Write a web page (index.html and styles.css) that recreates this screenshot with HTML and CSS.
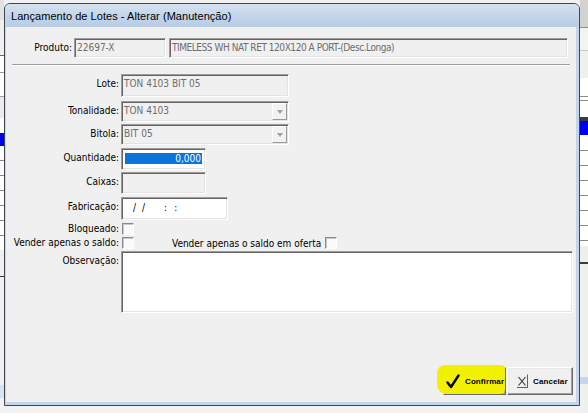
FILE: index.html
```html
<!DOCTYPE html>
<html lang="pt-BR">
<head>
<meta charset="utf-8">
<title>Lançamento de Lotes - Alterar (Manutenção)</title>
<link rel="stylesheet" href="styles.css">
</head>
<body>
<div class="screen">
  <div class="bg-left"></div>
  <div class="window">
    <div class="titlebar">Lançamento de Lotes - Alterar (Manutenção)</div>
    <div class="client">
      <div class="produto-row">
        <label class="lbl">Produto:</label>
        <div class="field">22697-X</div>
        <div class="field desc">TIMELESS WH NAT RET 120X120 A PORT-(Desc.Longa)</div>
      </div>
      <div class="sep"></div>
      <div class="form">
        <div class="row r-lote">
          <label class="lbl">Lote:</label>
          <div class="field w-lg">TON 4103 BIT 05</div>
        </div>
        <div class="row r-tonal">
          <label class="lbl">Tonalidade:</label>
          <div class="field combo w-lg"><span class="combo-text">TON 4103</span><span class="drop"><span class="arrow"></span></span></div>
        </div>
        <div class="row r-bitola">
          <label class="lbl">Bitola:</label>
          <div class="field combo w-lg"><span class="combo-text">BIT 05</span><span class="drop"><span class="arrow"></span></span></div>
        </div>
        <div class="row r-qtde">
          <label class="lbl">Quantidade:</label>
          <div class="field edit w-sm"><span class="selected">0,000</span></div>
        </div>
        <div class="row r-caixas">
          <label class="lbl">Caixas:</label>
          <div class="field w-sm"></div>
        </div>
        <div class="row r-fabric">
          <label class="lbl">Fabricação:</label>
          <div class="field edit w-md mask"><span class="m1">/</span><span class="m2">/</span><span class="m3">:</span><span class="m4">:</span></div>
        </div>
        <div class="row r-check r-bloq">
          <label class="lbl">Bloqueado:</label>
          <div class="checks"><span class="chk"></span></div>
        </div>
        <div class="row r-check r-vender">
          <label class="lbl">Vender apenas o saldo:</label>
          <div class="checks"><span class="chk"></span><span class="chk-text">Vender apenas o saldo em oferta</span><span class="chk"></span></div>
        </div>
        <div class="row r-obs">
          <label class="lbl">Observação:</label>
          <div class="field edit memo"></div>
        </div>
      </div>
      <div class="buttons">
        <button class="btn btn-ok" type="button">
          <span class="hl"></span>
          <svg class="ico" width="14" height="15" viewBox="0 0 14 15"><path d="M1.5 8.5 L5 13 L12.5 1.5" fill="none" stroke="#000" stroke-width="2.4" stroke-linecap="round" stroke-linejoin="round"/></svg>
          <span class="btn-text">Confirmar</span>
        </button>
        <button class="btn btn-cancel" type="button">
          <svg class="ico" width="12" height="14" viewBox="0 0 12 14"><path d="M1.5 3 L8.5 11.5 M8.5 3 L1.5 11.5" stroke="#303030" stroke-width="1.1" fill="none"/><path d="M10.5 0.5 V13.5 M0 13.5 H11" stroke="#606060" stroke-width="1" fill="none"/></svg>
          <span class="btn-text">Cancelar</span>
        </button>
      </div>
    </div>
  </div>
  <div class="bg-right"></div>
</div>
</body>
</html>
```
FILE: styles.css
```css
* { box-sizing: border-box; }

body {
  margin: 0;
  font-family: "DejaVu Sans Condensed", "DejaVu Sans", sans-serif;
  font-stretch: condensed;
  font-size: 10px;
  color: #000;
}

.screen {
  display: grid;
  grid-template-columns: 4px 576px 8px;
  width: 588px;
  height: 413px;
  background: #f2f2f2;
  overflow: hidden;
}

/* background application slivers */
.bg-left {
  background:
    repeating-linear-gradient(to bottom, #fff 0 14px, #8a8a8a 14px 15px) 0 146px / 4px 104px no-repeat,
    linear-gradient(to bottom,
      #e2e2e2 0 20px, #efefef 20px 55px, #6a6a6a 55px 56px, #fff 56px 72px,
      #9a9a9a 72px 73px, #fff 73px 96px, #a0a0a0 96px 97px, #ececec 97px 118px,
      #fff 118px 133px, #0000f0 133px 146px, #fff 146px 250px, #efefef 250px 276px,
      #3c3c3c 276px 277px, #f0f0f0 277px 385px, #d6e3f1 385px 398px, #f2f2f2 398px);
}

.bg-right {
  background:
    repeating-linear-gradient(to bottom, #fff 0 14px, #8a8a8a 14px 15px) 0 136px / 8px 110px no-repeat,
    linear-gradient(to bottom,
      #d2d2d2 0 27px, #8c8c8c 27px 28px, #f3f3f3 28px 50px, #c8c8c8 50px 51px,
      #f0f0f0 51px 78px, #fff 78px 96px, #8a8a8a 96px 97px, #fff 97px 100px,
      #8a8a8a 100px 101px, #fff 101px 117px, #3a3a3a 117px 121px, #0000f0 121px 135px,
      #fff 135px 246px, #eeeeee 246px 262px, #3c3c3c 262px 264px, #f0f0f0 264px 377px,
      #c4d6ea 377px 384px, #f0f0f0 384px);
}

/* dialog window */
.window {
  margin-top: 3px;
  height: 403px;
  border: 1px solid #3f4852;
  border-radius: 6px 6px 0 0;
  background: #c3d5e9;
  padding: 0 3px 3px 1px;
  display: flex;
  flex-direction: column;
}

.titlebar {
  height: 23px;
  margin: 0 -3px 0 -1px;
  padding: 0 0 0 6px;
  border-radius: 5px 5px 0 0;
  background: linear-gradient(to bottom, #d6e2f0, #c0d3e9 60%, #b8cce4);
  font-family: "Liberation Sans", Arial, sans-serif;
  font-stretch: normal;
  font-size: 11px;
  letter-spacing: 0.05px;
  line-height: 24px;
  color: #000;
  white-space: nowrap;
}

.client {
  flex: 1;
  background: #f0f0f0;
  display: flex;
  flex-direction: column;
}

.lbl {
  text-align: right;
  line-height: 13px;
  padding-top: 3px;
  white-space: nowrap;
}

/* sunken edit fields */
.field {
  height: 100%;
  border: 1px solid;
  border-color: #9c9c9c #fff #fff #9c9c9c;
  box-shadow: inset 1px 1px 0 #646464, inset -1px -1px 0 #e3e3e3;
  background: #f0f0f0;
  color: #6d6d6d;
  padding: 2px 0 0 2px;
  line-height: 13px;
  white-space: nowrap;
  overflow: hidden;
}

.field.edit { background: #fff; color: #000; }
.field.desc { letter-spacing: -0.45px; }

.produto-row {
  display: grid;
  grid-template-columns: 66px 92px 400px;
  column-gap: 2px;
  height: 20px;
  margin-top: 11px;
}
.produto-row .field:last-child { margin-left: 1px; }

.sep {
  height: 2px;
  margin: 6px 6px 0 6px;
  border-top: 1px solid #a0a0a0;
  border-bottom: 1px solid #fff;
}

.form { display: flex; flex-direction: column; }

.row {
  display: grid;
  grid-template-columns: 113px 1fr;
  column-gap: 2px;
  align-items: stretch;
}

.r-lote   { height: 23px; margin-top: 8px; }
.r-tonal  { height: 21px; margin-top: 4px; }
.r-bitola { height: 21px; margin-top: 2px; }
.r-qtde   { height: 22px; margin-top: 3px; }
.r-caixas { height: 22px; margin-top: 2px; }
.r-fabric { height: 23px; margin-top: 3px; }
.r-bloq   { height: 12px; margin-top: 3px; }
.r-vender { height: 12px; margin-top: 2px; }
.r-obs    { height: 62px; margin-top: 2px; }

.w-lg { width: 168px; }
.w-md { width: 107px; }
.w-sm { width: 85px; }
.memo { width: 452px; }

/* combo boxes */
.combo { display: flex; padding-right: 0; }
.combo-text { flex: 1; }
.drop {
  width: 15px;
  margin: -1px 1px 1px 0;
  background: #f2f2f2;
  border: 1px solid;
  border-color: #fff #9a9a9a #9a9a9a #fff;
  display: flex;
  align-items: center;
  justify-content: center;
}
.arrow {
  width: 0;
  height: 0;
  border-top: 4px solid #a0a0a0;
  border-left: 3.5px solid transparent;
  border-right: 3.5px solid transparent;
  margin-top: 1px;
}

/* quantity with selected text */
.r-qtde .field { padding: 4px 3px 0 3px; }
.selected {
  display: block;
  height: 11px;
  line-height: 11px;
  background: #0a74d8;
  color: #fff;
  text-align: right;
  padding-right: 1px;
}

/* date mask */
.mask { display: flex; padding-top: 3px; }
.m1 { margin-left: 9px; }
.m2 { margin-left: 6px; }
.m3 { margin-left: 19px; }
.m4 { margin-left: 7px; }

/* checkboxes */
.r-check .lbl { padding-top: 0; line-height: 12px; }
.checks { display: flex; align-items: center; }
.chk {
  width: 12px;
  height: 12px;
  margin-left: 1px;
  border: 1px solid;
  border-color: #8a8a8a #fff #fff #8a8a8a;
  box-shadow: inset 1px 1px 0 #c8c8c8;
  background: #fafafa;
}
.chk-text { margin-left: 38px; margin-right: 3px; white-space: nowrap; }

/* buttons */
.buttons {
  margin-top: auto;
  display: flex;
  justify-content: flex-end;
  gap: 1px;
  padding: 0 3px 7px 0;
}
.btn {
  position: relative;
  height: 28px;
  padding: 0;
  margin: 0;
  border: 1px solid;
  border-color: #fff #6a6a6a #6a6a6a #fff;
  box-shadow: inset -1px -1px 0 #a0a0a0, inset 1px 1px 0 #e8e8e8;
  background: #f0f0f0;
  display: flex;
  align-items: center;
  font-family: "Liberation Sans", Arial, sans-serif;
  font-stretch: normal;
  font-weight: bold;
  font-size: 8px;
  letter-spacing: 0.1px;
  color: #000;
}
.btn-ok { width: 63px; padding-left: 2px; }
.btn-cancel { width: 66px; padding-left: 9px; }
.btn .ico { position: relative; z-index: 1; flex: none; }
.btn-text { position: relative; z-index: 1; margin-left: 5px; }
.btn-cancel .btn-text { margin-left: 4px; }

/* yellow marker highlight drawn over the button */
.hl {
  position: absolute;
  left: -7px;
  top: -3px;
  width: 68px;
  height: 29px;
  background: #f2f200;
  border-radius: 8px 4px 5px 9px;
  z-index: 0;
}
```
